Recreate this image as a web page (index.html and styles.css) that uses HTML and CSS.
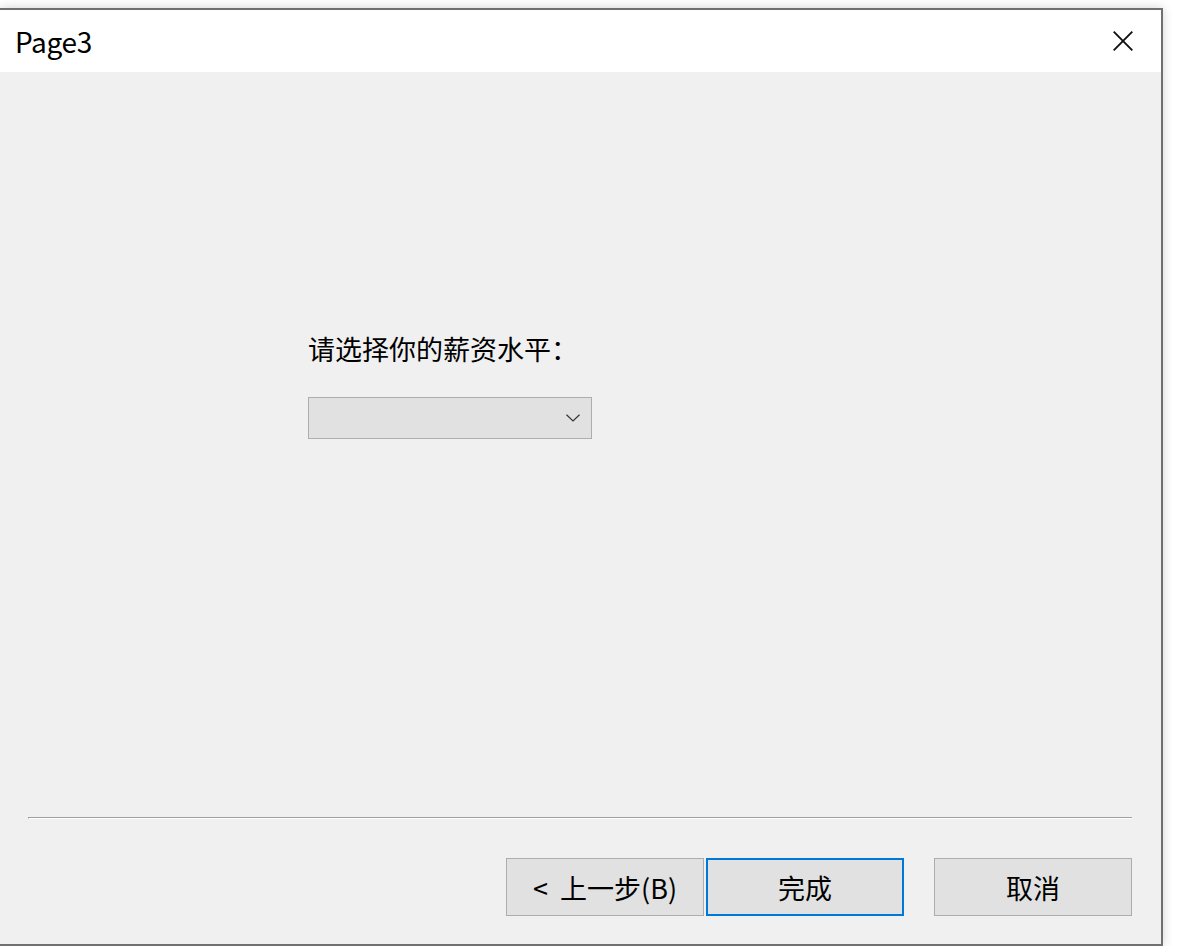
FILE: index.html
```html
<!DOCTYPE html>
<html lang="zh-CN">

<head>
  <meta charset="UTF-8">
  <meta name="viewport" content="width=device-width, initial-scale=1.0">
  <title>Page3</title>
  <link rel="stylesheet" href="styles.css">
</head>

<body>
  <div class="window">
    <header class="titlebar">
      <span class="titlebar__title">Page3</span>
      <button class="titlebar__close" aria-label="关闭">
        <svg width="20" height="20" viewBox="0 0 20 20">
          <path d="M0.7 0.7 L19.3 19.3 M19.3 0.7 L0.7 19.3" stroke="#111" stroke-width="1.9" fill="none" />
        </svg>
      </button>
    </header>
    <div class="page">
      <div class="page__main">
        <div class="field__label">请选择你的薪资水平：</div>
        <div class="combo">
          <svg class="combo__arrow" width="14" height="8" viewBox="0 0 14 8">
            <path d="M0.5 0.8 L7 7 L13.5 0.8" stroke="#333" stroke-width="1.2" fill="none" />
          </svg>
        </div>
      </div>
      <div class="separator"></div>
      <div class="actions">
        <button class="btn">&lt;&nbsp; 上一步(B)</button>
        <button class="btn btn--default">完成</button>
        <button class="btn btn--cancel">取消</button>
      </div>
    </div>
  </div>
</body>

</html>
```

FILE: styles.css
```css
html {
  font-size: 16px;
}

body {
  background-color: #fff;
  margin: 0;
  overflow: hidden;
}

* {
  box-sizing: border-box;
  font-family: "Noto Sans CJK SC", "Noto Sans", sans-serif;
}

.window {
  border: 2px solid #707070;
  border-left: none;
  box-shadow: 0 0 10px rgba(0, 0, 0, .18);
  margin-top: 8px;
  width: 1163px;
}

.titlebar {
  align-items: center;
  background-color: #fff;
  display: flex;
  height: 62px;
  justify-content: space-between;
  padding-left: 15px;
}

.titlebar__title {
  color: #000;
  font-size: 28px;
  letter-spacing: -.3px;
}

.titlebar__close {
  align-items: center;
  appearance: none;
  background: none;
  border: none;
  display: flex;
  height: 62px;
  justify-content: center;
  padding: 0;
  width: 76px;
}

.page {
  background-color: #f0f0f0;
  display: flex;
  flex-direction: column;
  height: 872px;
  padding: 0 29px 28px 28px;
}

.page__main {
  flex: 1;
  padding-left: 280px;
  padding-top: 263px;
}

.field__label {
  color: #000;
  font-size: 27px;
  line-height: 27px;
}

.combo {
  align-items: center;
  background-color: #e1e1e1;
  border: 1px solid #adadad;
  display: flex;
  height: 42px;
  justify-content: flex-end;
  margin-top: 35px;
  padding-right: 11px;
  width: 284px;
}

.separator {
  border-bottom: 1px solid #fff;
  border-left: 1px solid #a0a0a0;
  border-top: 1px solid #a0a0a0;
  height: 2px;
}

.actions {
  display: flex;
  justify-content: flex-end;
  margin-top: 39px;
}

.btn {
  appearance: none;
  background-color: #e1e1e1;
  border: 1px solid #adadad;
  color: #000;
  font-size: 27px;
  height: 58px;
  padding: 0;
  width: 198px;
}

.btn--default {
  border: 2px solid #0078d7;
  margin-left: 2px;
}

.btn--cancel {
  margin-left: 30px;
}
```
